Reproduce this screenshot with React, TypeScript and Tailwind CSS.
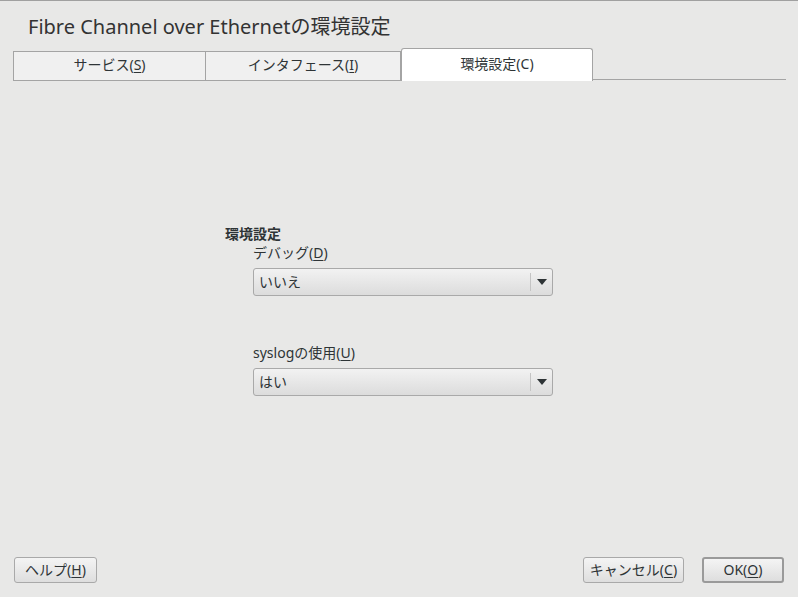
const font = { fontFamily: '"Noto Sans", "Noto Sans CJK JP", sans-serif' }

function Mn({ k }: { k: string }) {
  return <span className="underline underline-offset-2">{k}</span>
}

function Combo({ value }: { value: string }) {
  return (
    <div className="flex h-[28px] w-[300px] items-center rounded-[3px] border border-[#a9a9a9] bg-gradient-to-b from-[#f2f2f2] to-[#dcdcdc] pb-[2px] text-[14px] text-[#2e3436]">
      <span className="flex-1 pl-[5px]">{value}</span>
      <span className="mt-[2px] h-[18px] w-px bg-[#c4c4c4]" />
      <span className="mt-[2px] flex w-[21px] justify-center">
        <svg width="10" height="6" viewBox="0 0 10 6">
          <path d="M0 0 H10 L5 6 Z" fill="#2e3436" />
        </svg>
      </span>
    </div>
  )
}

function Btn({ children, w, main }: { children: React.ReactNode; w: string; main?: boolean }) {
  return (
    <button
      className={`flex h-[26px] ${w} items-center justify-center rounded-[3px] bg-gradient-to-b from-[#f4f4f4] to-[#dedede] pb-[2px] text-[14px] text-[#2e3436] ${main ? 'border-2 border-[#9a9a9a]' : 'border border-[#a9a9a9]'}`}
    >
      {children}
    </button>
  )
}

export default function App() {
  return (
    <div className="flex h-screen w-full flex-col border-t border-[#a0a0a0] bg-[#e8e8e7] text-[#2e3436]" style={font}>
      <div className="h-[47px] pl-[28px] pt-[12px] text-[20px] leading-[28px] text-[#333]">
        Fibre Channel over Ethernetの環境設定
      </div>

      <div className="flex h-[33px] items-end pl-[13px] pr-[12px] text-[14px]">
        <div className="flex h-[30px] w-[193px] items-center justify-center border border-[#a4a4a4] bg-[#f0f0f0] pb-[3px]">
          サービス(<Mn k="S" />)
        </div>
        <div className="flex h-[30px] w-[195px] items-center justify-center border border-l-0 border-[#a4a4a4] bg-[#f0f0f0] pb-[3px]">
          インタフェース(<Mn k="I" />)
        </div>
        <div className="flex h-[33px] w-[192px] items-center justify-center rounded-t-[3px] border border-b-0 border-[#a4a4a4] bg-white pb-[3px]">
          環境設定(C)
        </div>
        <div className="mb-[1px] h-[1px] flex-1 bg-[#a4a4a4]" />
      </div>

      <div className="flex flex-1 flex-col pl-[225px] pt-[144px]">
        <div className="text-[14px] font-bold leading-[18px]">環境設定</div>
        <div className="flex flex-col pl-[28px]">
          <div className="text-[14px] leading-[20px]">
            デバッグ(<Mn k="D" />)
          </div>
          <div className="mt-[5px]">
            <Combo value="いいえ" />
          </div>
          <div className="mt-[47px] text-[14px] leading-[20px]">
            syslogの使用(<Mn k="U" />)
          </div>
          <div className="mt-[5px]">
            <Combo value="はい" />
          </div>
        </div>
      </div>

      <div className="flex items-center pb-[14px] pl-[14px] pr-[14px]">
        <Btn w="w-[83px]">
          ヘルプ(<Mn k="H" />)
        </Btn>
        <div className="flex-1" />
        <Btn w="w-[101px]">
          キャンセル(<Mn k="C" />)
        </Btn>
        <div className="w-[18px]" />
        <Btn w="w-[82px]" main>
          OK(<Mn k="O" />)
        </Btn>
      </div>
    </div>
  )
}
